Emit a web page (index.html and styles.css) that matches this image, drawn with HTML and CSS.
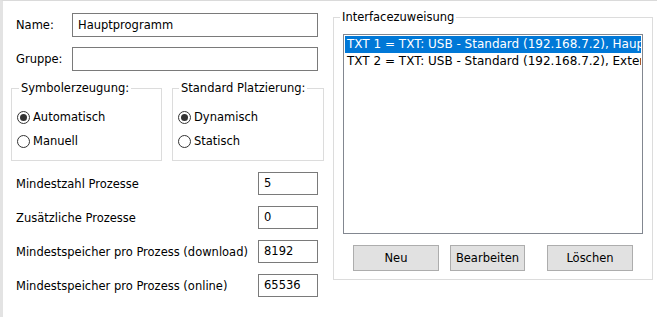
FILE: index.html
```html
<!DOCTYPE html>
<html lang="de">
<head>
<meta charset="utf-8">
<title>Programm</title>
<link rel="stylesheet" href="styles.css">
</head>
<body>
<div class="window">
  <div class="left">
    <div class="row first">
      <span class="lbl">Name:</span>
      <div class="input wide">Hauptprogramm</div>
    </div>
    <div class="row second">
      <span class="lbl">Gruppe:</span>
      <div class="input wide"></div>
    </div>
    <div class="groups">
      <fieldset class="group g1">
        <legend>Symbolerzeugung:</legend>
        <div class="radio"><span class="dot on"></span>Automatisch</div>
        <div class="radio"><span class="dot"></span>Manuell</div>
      </fieldset>
      <fieldset class="group g2">
        <legend>Standard Platzierung:</legend>
        <div class="radio"><span class="dot on"></span>Dynamisch</div>
        <div class="radio"><span class="dot"></span>Statisch</div>
      </fieldset>
    </div>
    <div class="nums">
      <div class="num"><span class="nlbl">Mindestzahl Prozesse</span><div class="input small">5</div></div>
      <div class="num"><span class="nlbl">Zusätzliche Prozesse</span><div class="input small">0</div></div>
      <div class="num"><span class="nlbl">Mindestspeicher pro Prozess (download)</span><div class="input small">8192</div></div>
      <div class="num"><span class="nlbl">Mindestspeicher pro Prozess (online)</span><div class="input small">65536</div></div>
    </div>
  </div>
  <div class="right">
    <fieldset class="iface">
      <legend>Interfacezuweisung</legend>
      <div class="list">
        <div class="item sel">TXT 1 = TXT: USB - Standard (192.168.7.2), Hauptprogramm</div>
        <div class="item">TXT 2 = TXT: USB - Standard (192.168.7.2), Extension</div>
      </div>
      <div class="buttons">
        <div class="btn neu">Neu</div>
        <div class="btn edit">Bearbeiten</div>
        <div class="btn del">Löschen</div>
      </div>
    </fieldset>
  </div>
</div>
</body>
</html>
```
FILE: styles.css
```css
* { box-sizing: border-box; }
html, body { margin: 0; padding: 0; background: #fff; }
body {
  font-family: "DejaVu Sans", Tahoma, sans-serif;
  font-size: 11.5px;
  color: #000;
}
.window {
  display: flex;
  width: 657px;
  height: 317px;
  border-left: 3px solid #e3e3e3;
  border-top: 1px solid #dadada;
  background: #fff;
}
.left {
  width: 327px;
  padding-left: 8px;
  display: flex;
  flex-direction: column;
}
.row {
  display: flex;
  align-items: center;
  padding-left: 5px;
}
.row.first { margin-top: 12px; }
.row.second { margin-top: 10px; }
.lbl { width: 56px; }
.input {
  border: 1px solid #7a7a7a;
  background: #fff;
  height: 24px;
  line-height: 22px;
  padding-left: 5px;
  white-space: nowrap;
}
.input.wide { width: 246px; }
.groups {
  display: flex;
  gap: 10px;
  margin-top: 10px;
}
fieldset { margin: 0; min-width: 0; }
legend {
  padding: 0 2px;
  line-height: 14px;
  color: #000;
}
.group {
  border: 1px solid #dcdcdc;
  padding: 10px 0 7px 5px;
}
.g1 { width: 151px; }
.g1 legend { margin-left: 2px; }
.g2 { width: 152px; }
.g2 legend { margin-left: 1px; }
.radio {
  display: flex;
  align-items: center;
  height: 24px;
}
.dot {
  width: 13px;
  height: 13px;
  border: 1px solid #333;
  border-radius: 50%;
  margin-right: 3px;
  display: flex;
  align-items: center;
  justify-content: center;
  background: #fff;
}
.dot.on::after {
  content: "";
  width: 7px;
  height: 7px;
  border-radius: 50%;
  background: #333;
}
.nums {
  display: flex;
  flex-direction: column;
  gap: 11px;
  margin-top: 11px;
  padding-left: 5px;
}
.num {
  display: flex;
  align-items: center;
  height: 23px;
}
.nlbl { width: 242px; white-space: nowrap; }
.input.small {
  width: 60px;
  height: 23px;
  line-height: 21px;
}
.right {
  width: 327px;
}
.iface {
  margin: 9px 0 0 3px;
  width: 320px;
  border: 1px solid #dcdcdc;
  padding: 10px 0 8px 9px;
}
.iface legend { margin-left: -3px; }
.list {
  width: 300px;
  height: 200px;
  border: 1px solid #828790;
  padding: 1px 1px 0 1px;
  overflow: hidden;
  background: #fff;
}
.item {
  height: 17px;
  line-height: 17px;
  padding-left: 2px;
  white-space: nowrap;
  overflow: hidden;
  font-size: 12px;
}
.item.sel {
  background: #0078d7;
  color: #fff;
}
.buttons {
  display: flex;
  margin-top: 11px;
  padding-left: 10px;
}
.btn {
  height: 26px;
  line-height: 24px;
  text-align: center;
  background: #e1e1e1;
  border: 1px solid #adadad;
}
.btn.neu { width: 86px; }
.btn.edit { width: 75px; margin-left: 11px; }
.btn.del { width: 86px; margin-left: 22px; }
```
